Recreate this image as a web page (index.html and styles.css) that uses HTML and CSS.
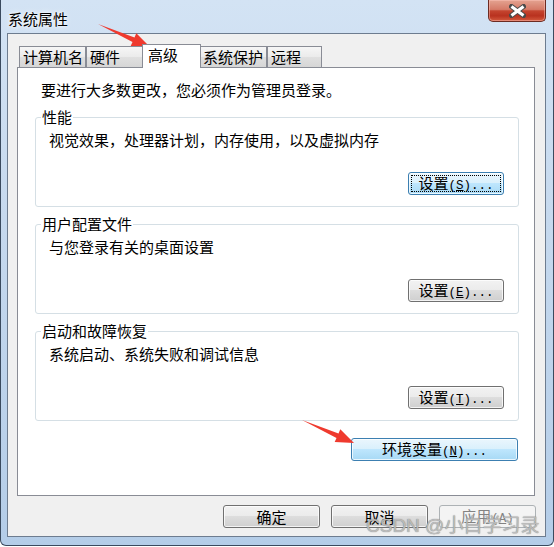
FILE: index.html
```html
<!DOCTYPE html>
<html lang="zh-CN">
<head>
  <meta charset="UTF-8">
  <title>系统属性</title>
  <link rel="stylesheet" href="styles.css">
</head>
<body>
  <div class="window">
    <div class="titlebar">
      <span class="title">系统属性</span>
      <div class="close-btn">
        <svg width="17" height="14" viewBox="0 0 17 14">
          <path d="M2.5 2.5 L14.5 11.5 M14.5 2.5 L2.5 11.5" stroke="#4a4a4a" stroke-width="5" stroke-linecap="square"/>
          <path d="M2.5 2.5 L14.5 11.5 M14.5 2.5 L2.5 11.5" stroke="#fff" stroke-width="3"/>
        </svg>
      </div>
    </div>

    <div class="client">
      <div class="tabs">
        <div class="tab">计算机名</div>
        <div class="tab tab-wide">硬件</div>
        <div class="tab active">高级</div>
        <div class="tab">系统保护</div>
        <div class="tab">远程</div>
      </div>

      <div class="panel">
        <p class="note">要进行大多数更改，您必须作为管理员登录。</p>

        <!-- 性能 -->
        <div class="group">
          <div class="legend">性能</div>
          <p class="desc">视觉效果，处理器计划，内存使用，以及虚拟内存</p>
          <button class="btn btn-hot btn-focus">设置<span class="mono">(<u>S</u>)...</span></button>
        </div>

        <!-- 用户配置文件 -->
        <div class="group">
          <div class="legend">用户配置文件</div>
          <p class="desc">与您登录有关的桌面设置</p>
          <button class="btn">设置<span class="mono">(<u>E</u>)...</span></button>
        </div>

        <!-- 启动和故障恢复 -->
        <div class="group">
          <div class="legend">启动和故障恢复</div>
          <p class="desc">系统启动、系统失败和调试信息</p>
          <button class="btn">设置<span class="mono">(<u>T</u>)...</span></button>
        </div>

        <button class="btn btn-hot btn-env">环境变量<span class="mono">(<u>N</u>)...</span></button>
      </div>

      <div class="footer">
        <button class="btn">确定</button>
        <button class="btn">取消</button>
        <button class="btn" disabled>应用<span class="mono">(<u>A</u>)</span></button>
      </div>
    </div>
  </div>

  <!-- annotations -->
  <svg class="marks" width="554" height="547" viewBox="0 0 554 547">
    <polygon points="98,24 134.5,37.4 136.3,33.3 150,47 130.7,46.1 132.5,42" fill="#ef3a2e"/>
    <polygon points="98,24 134.5,37.4 136.3,33.3 150,47 130.7,46.1 132.5,42" fill="#ef3a2e" transform="translate(204,396)"/>
  </svg>
  <div class="watermark">CSDN @小白学习录</div>
</body>
</html>
```

FILE: styles.css
```css
* { box-sizing: border-box; margin: 0; padding: 0; }
body {
  background: #fff;
  font-family: "Noto Sans CJK SC", sans-serif;
  font-size: 15px;
  color: #000;
}

.window {
  width: 554px;
  height: 546px;
  padding: 0 7px 8px 6px;
  border: 1px solid #3a4a5e;
  border-top: none;
  border-radius: 0 0 6px 6px;
  background: linear-gradient(#d3e3f4, #c6d9ee 40%, #b4cde8);
  display: flex;
  flex-direction: column;
}

.titlebar {
  height: 33px;
  flex-shrink: 0;
  display: flex;
  justify-content: space-between;
  align-items: flex-start;
}
.title {
  margin: 10px 0 0 1px;
  line-height: 18px;
  text-shadow: 0 0 6px #fff, 0 0 3px #fff;
}
.close-btn {
  width: 58px;
  height: 22px;
  border: 1px solid #6c2b22;
  border-top: none;
  border-radius: 0 0 5px 5px;
  background: linear-gradient(#e4a391 0%, #d57a67 45%, #c4442f 52%, #b9321f 75%, #d35a3e 100%);
  box-shadow: inset 0 0 0 1px rgba(255, 200, 190, .45);
  display: flex;
  align-items: center;
  justify-content: center;
}

.client {
  flex: 1;
  border: 1px solid #6d7c8f;
  background: #f0f0f0;
  padding: 10px 10px 0 9px;
  display: flex;
  flex-direction: column;
}

/* tabs */
.tabs {
  display: flex;
  align-items: flex-end;
  padding-left: 2px;
  margin-bottom: -1px;
  position: relative;
  z-index: 1;
}
.tab {
  height: 22px;
  min-width: 55px;
  padding: 0 3px 0 3px;
  line-height: 20px;
  border: 1px solid #898c95;
  background: linear-gradient(#f6f6f6, #ebebeb 50%, #e0e0e0 51%, #d6d6d6);
}
.tab:first-child { padding-right: 2px; }
.tab-wide { min-width: 58px; }
.tab.active {
  height: 24px;
  min-width: 59px;
  margin: 0 -2px;
  padding: 0 5px 3px;
  border-bottom: none;
  background: #fff;
  position: relative;
  z-index: 1;
}

.panel {
  height: 429px;
  border: 1px solid #898c95;
  background: #fff;
  padding: 13px 15px 0 17px;
  display: flex;
  flex-direction: column;
}
.note {
  margin-left: 6px;
  line-height: 18px;
}

/* group boxes */
.group {
  margin-top: 18px;
  border: 1px solid #d5dfe5;
  border-radius: 3px;
  padding: 0 14px 11px 13px;
  display: flex;
  flex-direction: column;
}
.group + .group { margin-top: 17px; }
.legend {
  align-self: flex-start;
  margin: -10px 0 0 -8px;
  padding: 0 1px;
  background: #fff;
  line-height: 18px;
}
.desc {
  margin-top: 5px;
  line-height: 18px;
}
.group .btn {
  align-self: flex-end;
  margin-top: 23px;
  width: 96px;
}

/* buttons */
.btn {
  width: 97px;
  height: 23px;
  border: 1px solid #707070;
  border-radius: 3px;
  background: linear-gradient(#f2f2f2 0%, #ebebeb 49%, #dddddd 50%, #cfcfcf 100%);
  box-shadow: inset 0 0 0 1px rgba(255, 255, 255, .75);
  font-family: "Noto Sans CJK SC", sans-serif;
  font-size: 15px;
  line-height: 20px;
  color: #000;
}
.btn-hot {
  border-color: #3c7fb1;
  background: linear-gradient(#eaf6fd 0%, #d9f0fc 49%, #bee6fd 50%, #a7d9f5 100%);
}
.btn-focus {
  outline: 1px dotted #000;
  outline-offset: -4px;
}
.btn-env {
  align-self: flex-end;
  width: 167px;
  margin: 17px 1px 0 0;
}
.btn:disabled {
  border-color: #adb2b5;
  background: #f4f4f4;
  box-shadow: none;
  color: #838383;
}
.mono {
  font-family: "Liberation Mono", monospace;
  font-size: 12.5px;
}

.footer {
  display: flex;
  justify-content: flex-end;
  gap: 11px;
  margin: 9px -1px 0 0;
}

/* screenshot annotations */
.marks {
  position: absolute;
  left: 0;
  top: 0;
  pointer-events: none;
}
.watermark {
  position: absolute;
  left: 366px;
  top: 516px;
  font-family: "Liberation Sans", "Noto Sans CJK SC", sans-serif;
  font-size: 19px;
  line-height: 20px;
  color: rgba(205, 205, 205, .8);
  text-shadow: 0 0 1px #666;
  pointer-events: none;
}
```
